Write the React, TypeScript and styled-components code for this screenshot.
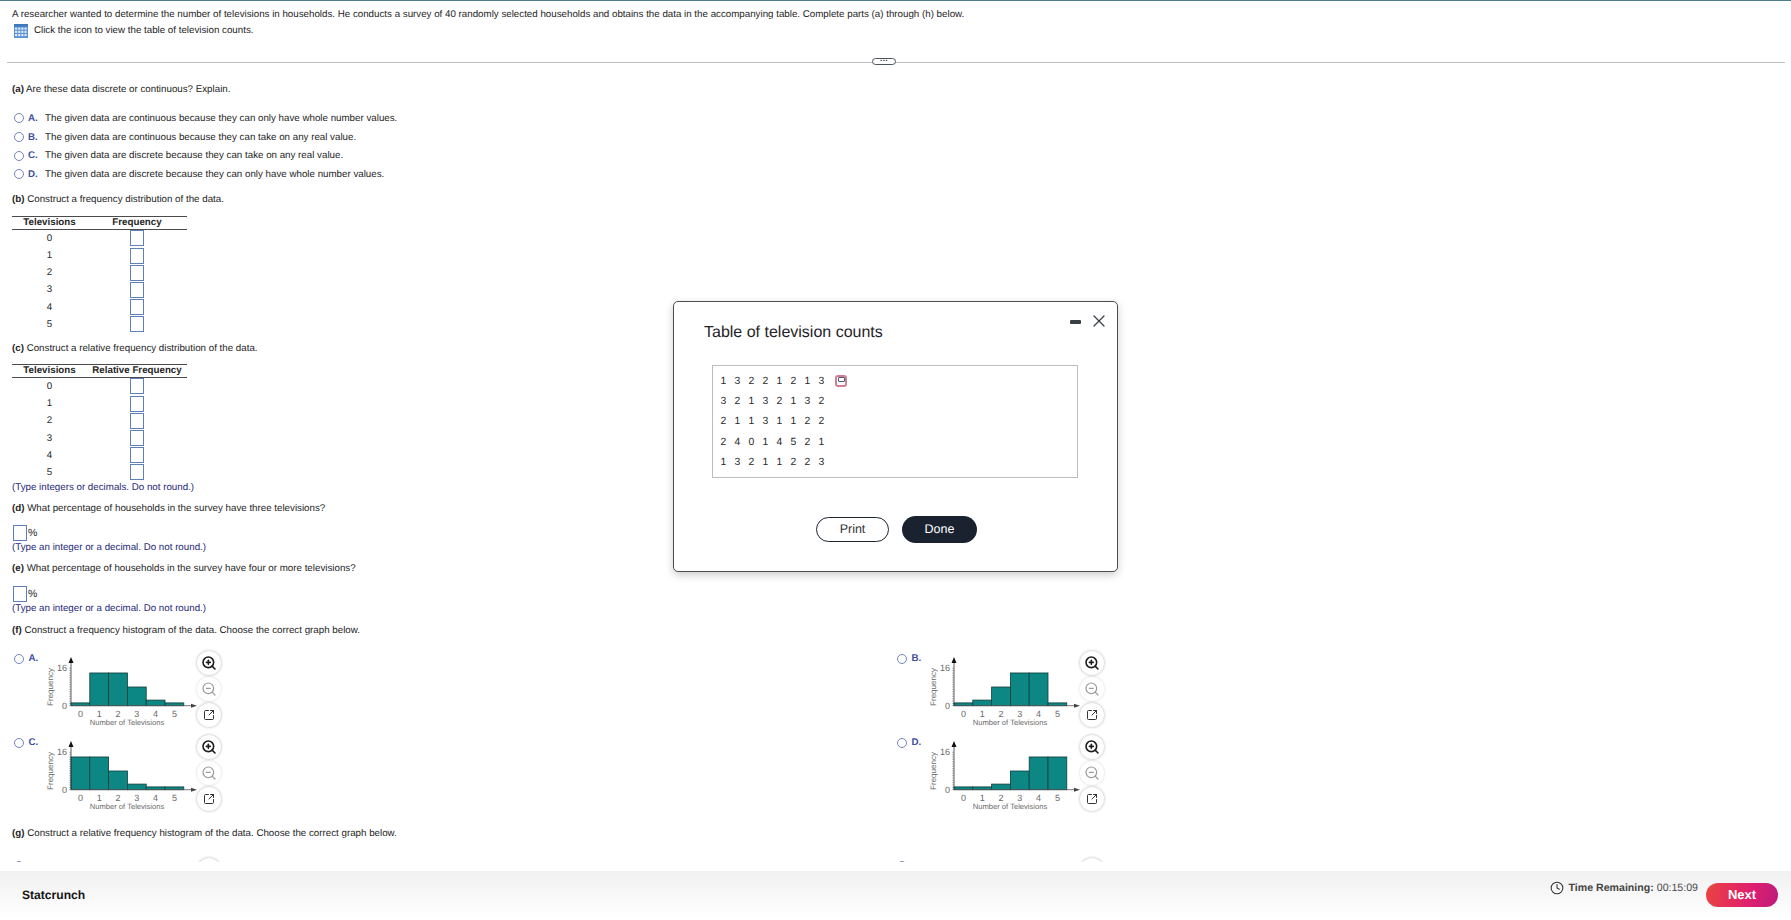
import styled, { createGlobalStyle } from "styled-components";
import { Clock, SquareArrowOutUpRight, X, ZoomIn, ZoomOut } from "lucide-react";

const GlobalStyle = createGlobalStyle`
  html, body {
    margin: 0;
    padding: 0;
    background: #fff;
  }
  body {
    font-family: "Liberation Sans", Arial, sans-serif;
    font-size: 9.75px;
    color: #262626;
    text-rendering: geometricPrecision;
  }
`;

const Page = styled.div`
  position: relative;
  display: flex;
  flex-direction: column;
  height: 920px;
  width: 1791px;
  overflow: hidden;
  border-top: 1px solid #4c7c8e;
  box-sizing: border-box;
`;

const Content = styled.div`
  height: 861px;
  box-sizing: border-box;
  overflow: hidden;
  padding: 6px 6px 0 12px;
  flex: none;
`;

const Para = styled.div<{ $top?: number }>`
  line-height: 16px;
  margin-top: ${(p) => p.$top ?? 0}px;
  white-space: nowrap;
`;

const IconLine = styled(Para)`
  display: flex;
  align-items: center;
  gap: 6px;
  height: 15px;
  padding-left: 2px;
`;

const Note = styled.div`
  line-height: 14px;
  color: #1f2a7a;
  white-space: nowrap;
`;

const DividerWrap = styled.div`
  position: relative;
  margin: 24px 0 0 -5px;
  height: 1px;
  background: #c4bfc2;
`;

const Handle = styled.div`
  position: absolute;
  left: 865px;
  top: -4px;
  width: 24px;
  height: 7px;
  box-sizing: border-box;
  border: 1px solid #4a545d;
  border-radius: 4px;
  background: #fff;
  color: #20282f;
  font-size: 8px;
  font-weight: bold;
  line-height: 0;
  text-align: center;
  letter-spacing: 0.5px;
`;

const OptionList = styled.div`
  margin-top: 11px;
`;

const OptionRow = styled.div`
  display: flex;
  align-items: center;
  height: 18.7px;
  white-space: nowrap;
`;

const Radio = styled.span`
  display: block;
  flex: none;
  width: 10px;
  height: 10px;
  margin-left: 2px;
  box-sizing: border-box;
  border: 1px solid #7486ba;
  border-radius: 50%;
  background: #fff;
`;

const Letter = styled.b`
  flex: none;
  width: 17px;
  margin-left: 4px;
  color: #3d4f9f;
`;

const FreqTable = styled.div<{ $top: number }>`
  width: 175px;
  margin-top: ${(p) => p.$top}px;
`;

const TableHead = styled.div`
  display: grid;
  grid-template-columns: 75px 100px;
  height: 14px;
  box-sizing: border-box;
  border-top: 1px solid #4b4b4b;
  border-bottom: 1px solid #4b4b4b;
  font-weight: bold;
  line-height: 12px;
  text-align: center;
`;

const TableRow = styled.div`
  display: grid;
  grid-template-columns: 75px 100px;
  height: 17.2px;
  align-items: center;
  justify-items: center;
`;

const Blank = styled.span`
  display: block;
  flex: none;
  width: 14px;
  height: 16px;
  box-sizing: border-box;
  border: 1px solid #5e7fb8;
  background: #fff;
`;

const PercentRow = styled.div<{ $top: number }>`
  display: flex;
  align-items: center;
  gap: 1px;
  margin-top: ${(p) => p.$top}px;
  height: 16px;
  padding-left: 1px;
  font-size: 10.5px;
`;

const GraphGrid = styled.div<{ $top: number }>`
  display: grid;
  grid-template-columns: 883px 240px;
  grid-auto-rows: 84px;
  margin-top: ${(p) => p.$top}px;
`;

const GraphOption = styled.div`
  display: grid;
  grid-template-columns: 16.5px 11.5px 157px 24px;
  align-items: start;
`;

const GraphRadio = styled(Radio)`
  margin-top: 3px;
`;

const GraphLetter = styled.b`
  line-height: 16px;
  color: #3d4f9f;
`;

const ChartSvg = styled.svg`
  display: block;
  margin-top: 3px;
  overflow: visible;
`;

const Tools = styled.div`
  display: flex;
  flex-direction: column;
  gap: 2px;
`;

const ToolButton = styled.span<{ $muted?: boolean }>`
  display: flex;
  align-items: center;
  justify-content: center;
  width: 24px;
  height: 24px;
  border-radius: 50%;
  background: #fff;
  color: ${(p) => (p.$muted ? "#9a9a9a" : "#1d1d1d")};
  box-shadow: 0 0 3px rgba(0, 0, 0, ${(p) => (p.$muted ? 0.16 : 0.32)});
`;

const Footer = styled.div`
  margin-top: auto;
  display: flex;
  align-items: center;
  height: 49px;
  box-sizing: border-box;
  padding: 0 13px 2px 22px;
  background: linear-gradient(#f1f1f1, #ffffff);
`;

const Brand = styled.b`
  font-size: 12.1px;
  color: #161616;
`;

const Timer = styled.div`
  margin-left: auto;
  display: flex;
  align-items: center;
  gap: 3px;
  margin-top: -13px;
  font-size: 10.6px;
  color: #4a4a4a;
  white-space: nowrap;
`;

const TimerLabel = styled.b`
  margin-left: 2px;
  color: #444;
`;

const NextButton = styled.span`
  margin-left: 8px;
  width: 72px;
  height: 24px;
  margin-top: 1px;
  border-radius: 12px;
  background: linear-gradient(100deg, #ea4440, #e01f6e 60%, #bd1c7c);
  color: #fff;
  font-size: 13px;
  font-weight: bold;
  line-height: 24px;
  text-align: center;
`;

const Modal = styled.div`
  position: absolute;
  left: 673px;
  top: 300px;
  width: 445px;
  height: 271px;
  box-sizing: border-box;
  display: flex;
  flex-direction: column;
  padding: 0 39px 0 30px;
  background: #fff;
  border: 1px solid #4d4d4d;
  border-radius: 5px;
  box-shadow: 0 3px 8px rgba(0, 0, 0, 0.2);
`;

const ModalTitle = styled.div`
  margin-top: 20px;
  font-size: 16px;
  line-height: 22px;
  color: #1f2328;
`;

const WindowControls = styled.div`
  position: absolute;
  right: 8px;
  top: 9px;
  display: flex;
  align-items: center;
  gap: 8px;
  color: #3a3f45;
`;

const MinimizeBar = styled.span`
  display: block;
  width: 11px;
  height: 4px;
  margin-top: 2px;
  border-radius: 1px;
  background: #3a3f45;
`;

const DataBox = styled.div`
  margin: 21px 0 0 8px;
  height: 113px;
  box-sizing: border-box;
  padding: 5px 0 0 3.5px;
  border: 1px solid #bdbdbd;
`;

const DataRow = styled.div`
  display: grid;
  grid-template-columns: repeat(8, 14px) 22px;
  height: 20.4px;
  align-items: center;
  justify-items: center;
  font-size: 10.4px;
  color: #2a2a2a;
`;

const PopoutIcon = styled.span`
  position: relative;
  display: block;
  width: 12px;
  height: 12px;
  box-sizing: border-box;
  border: 2px solid #d07f92;
  border-radius: 3px;
  margin-left: 2px;

  &::after {
    content: "";
    position: absolute;
    left: 1px;
    top: 0;
    width: 5px;
    height: 3px;
    border: 1px solid #4a5a78;
    border-radius: 1px;
  }
`;

const ModalActions = styled.div`
  display: flex;
  align-items: center;
  justify-content: center;
  gap: 13px;
  margin: 38px 0 0 11px;
`;

const PrintButton = styled.span`
  width: 73px;
  height: 25px;
  box-sizing: border-box;
  border: 1px solid #1d2530;
  border-radius: 13px;
  font-size: 12.5px;
  line-height: 23px;
  text-align: center;
  color: #333;
`;

const DoneButton = styled.span`
  width: 75px;
  height: 27px;
  border-radius: 14px;
  background: #1a2230;
  color: #fff;
  font-size: 12.5px;
  line-height: 27px;
  text-align: center;
`;

const tableLabels = [0, 1, 2, 3, 4, 5];

const choices = [
  ["A.", "The given data are continuous because they can only have whole number values."],
  ["B.", "The given data are continuous because they can take on any real value."],
  ["C.", "The given data are discrete because they can take on any real value."],
  ["D.", "The given data are discrete because they can only have whole number values."],
];

const counts = [
  [1, 3, 2, 2, 1, 2, 1, 3],
  [3, 2, 1, 3, 2, 1, 3, 2],
  [2, 1, 1, 3, 1, 1, 2, 2],
  [2, 4, 0, 1, 4, 5, 2, 1],
  [1, 3, 2, 1, 1, 2, 2, 3],
];

const graphs = [
  { letter: "A.", bars: [1.2, 14, 14, 8, 2.4, 1.2] },
  { letter: "B.", bars: [1.2, 2.4, 8, 14, 14, 1.2] },
  { letter: "C.", bars: [14, 14, 8, 2.4, 1.2, 1.2] },
  { letter: "D.", bars: [1.2, 1.2, 2.4, 8, 14, 14] },
];

function GridIcon() {
  return (
    <svg width="14" height="14" viewBox="0 0 13 13">
      <rect x="0" y="0" width="13" height="13" fill="#5b93d3" />
      <rect x="0" y="0" width="13" height="2.4" fill="#3f78bd" />
      {[0, 1, 2, 3].map((c) =>
        [0, 1, 2].map((r) => (
          <rect key={`${c}-${r}`} x={1 + c * 2.9} y={3.3 + r * 3} width="2" height="2" fill="#dfeaf7" />
        )),
      )}
    </svg>
  );
}

function Histogram({ bars }: { bars: number[] }) {
  const x0 = 31;
  const y0 = 51.7;
  const unit = 37.4 / 16;
  const barW = 18.8;
  return (
    <ChartSvg width="157" height="78" viewBox="0 0 157 78">
      <g fontFamily="Liberation Sans, Arial, sans-serif" fill="#6a6a6a">
        <text x="10" y="33" fontSize="8" textAnchor="middle" transform="rotate(-90 10 33)" dy="3">
          Frequency
        </text>
        <text x="27" y="17" fontSize="9" textAnchor="end">
          16
        </text>
        <text x="27" y="55" fontSize="9" textAnchor="end">
          0
        </text>
        {tableLabels.map((n) => (
          <text key={n} x={x0 + barW * (n + 0.5)} y="63" fontSize="9" textAnchor="middle">
            {n}
          </text>
        ))}
        <text x="87" y="71" fontSize="7.6" textAnchor="middle">
          Number of Televisions
        </text>
      </g>
      {Array.from({ length: 17 }).map((_, i) => (
        <line key={i} x1={x0 - 2} x2={x0} y1={y0 - i * unit} y2={y0 - i * unit} stroke="#777" strokeWidth="0.5" />
      ))}
      {bars.map((v, i) => (
        <rect
          key={i}
          x={x0 + i * barW}
          y={y0 - v * unit}
          width={barW}
          height={v * unit}
          fill="#0c8784"
          stroke="#123c3c"
          strokeWidth="0.8"
        />
      ))}
      <line x1={x0} x2={x0} y1={y0} y2={7} stroke="#333" strokeWidth="0.8" />
      <path d={`M${x0} 3 L${x0 - 2.5} 9 H${x0 + 2.5} Z`} fill="#111" />
      <line x1={x0} x2={152} y1={y0} y2={y0} stroke="#555" strokeWidth="0.8" />
      <path d={`M157 ${y0} L151 ${y0 - 2} V${y0 + 2} Z`} fill="#444" />
    </ChartSvg>
  );
}

function GraphChoice({ letter, bars }: { letter: string; bars: number[] }) {
  return (
    <GraphOption>
      <GraphRadio />
      <GraphLetter>{letter}</GraphLetter>
      <Histogram bars={bars} />
      <Tools>
        <ToolButton>
          <ZoomIn size={16} strokeWidth={2.4} />
        </ToolButton>
        <ToolButton $muted>
          <ZoomOut size={16} strokeWidth={1.8} />
        </ToolButton>
        <ToolButton>
          <SquareArrowOutUpRight size={12} strokeWidth={1.8} />
        </ToolButton>
      </Tools>
    </GraphOption>
  );
}

// next question's graphs, only their top edge shows above the footer
function PeekChoice() {
  return (
    <GraphOption>
      <GraphRadio />
      <span />
      <span />
      <ToolButton />
    </GraphOption>
  );
}

function CountTable({ title, top }: { title: string; top: number }) {
  return (
    <FreqTable $top={top}>
      <TableHead>
        <span>Televisions</span>
        <span>{title}</span>
      </TableHead>
      {tableLabels.map((n) => (
        <TableRow key={n}>
          <span>{n}</span>
          <Blank />
        </TableRow>
      ))}
    </FreqTable>
  );
}

function App() {
  return (
    <Page>
      <GlobalStyle />
      <Content>
        <Para>
          A researcher wanted to determine the number of televisions in households. He conducts a survey of 40
          randomly selected households and obtains the data in the accompanying table. Complete parts (a) through
          (h) below.
        </Para>
        <IconLine>
          <GridIcon />
          Click the icon to view the table of television counts.
        </IconLine>
        <DividerWrap>
          <Handle>...</Handle>
        </DividerWrap>

        <Para $top={19}>
          <b>(a)</b> Are these data discrete or continuous? Explain.
        </Para>
        <OptionList>
          {choices.map(([letter, text]) => (
            <OptionRow key={letter}>
              <Radio />
              <Letter>{letter}</Letter>
              {text}
            </OptionRow>
          ))}
        </OptionList>

        <Para $top={8}>
          <b>(b)</b> Construct a frequency distribution of the data.
        </Para>
        <CountTable title="Frequency" top={8} />

        <Para $top={8}>
          <b>(c)</b> Construct a relative frequency distribution of the data.
        </Para>
        <CountTable title="Relative Frequency" top={7} />
        <Note>(Type integers or decimals. Do not round.)</Note>

        <Para $top={6}>
          <b>(d)</b> What percentage of households in the survey have three televisions?
        </Para>
        <PercentRow $top={8}>
          <Blank />%
        </PercentRow>
        <Note>(Type an integer or a decimal. Do not round.)</Note>

        <Para $top={6}>
          <b>(e)</b> What percentage of households in the survey have four or more televisions?
        </Para>
        <PercentRow $top={9}>
          <Blank />%
        </PercentRow>
        <Note>(Type an integer or a decimal. Do not round.)</Note>

        <Para $top={7}>
          <b>(f)</b> Construct a frequency histogram of the data. Choose the correct graph below.
        </Para>
        <GraphGrid $top={12}>
          {graphs.map((g) => (
            <GraphChoice key={g.letter} letter={g.letter} bars={g.bars} />
          ))}
        </GraphGrid>

        <Para $top={7}>
          <b>(g)</b> Construct a relative frequency histogram of the data. Choose the correct graph below.
        </Para>
        <GraphGrid $top={16}>
          <PeekChoice />
          <PeekChoice />
        </GraphGrid>
      </Content>

      <Footer>
        <Brand>Statcrunch</Brand>
        <Timer>
          <Clock size={14} strokeWidth={1.8} color="#333" />
          <TimerLabel>Time Remaining:</TimerLabel> 00:15:09
        </Timer>
        <NextButton>Next</NextButton>
      </Footer>

      <Modal>
        <ModalTitle>Table of television counts</ModalTitle>
        <WindowControls>
          <MinimizeBar />
          <X size={20} strokeWidth={1.5} />
        </WindowControls>
        <DataBox>
          {counts.map((row, r) => (
            <DataRow key={r}>
              {row.map((n, c) => (
                <span key={c}>{n}</span>
              ))}
              {r === 0 && <PopoutIcon />}
            </DataRow>
          ))}
        </DataBox>
        <ModalActions>
          <PrintButton>Print</PrintButton>
          <DoneButton>Done</DoneButton>
        </ModalActions>
      </Modal>
    </Page>
  );
}

export default App;
